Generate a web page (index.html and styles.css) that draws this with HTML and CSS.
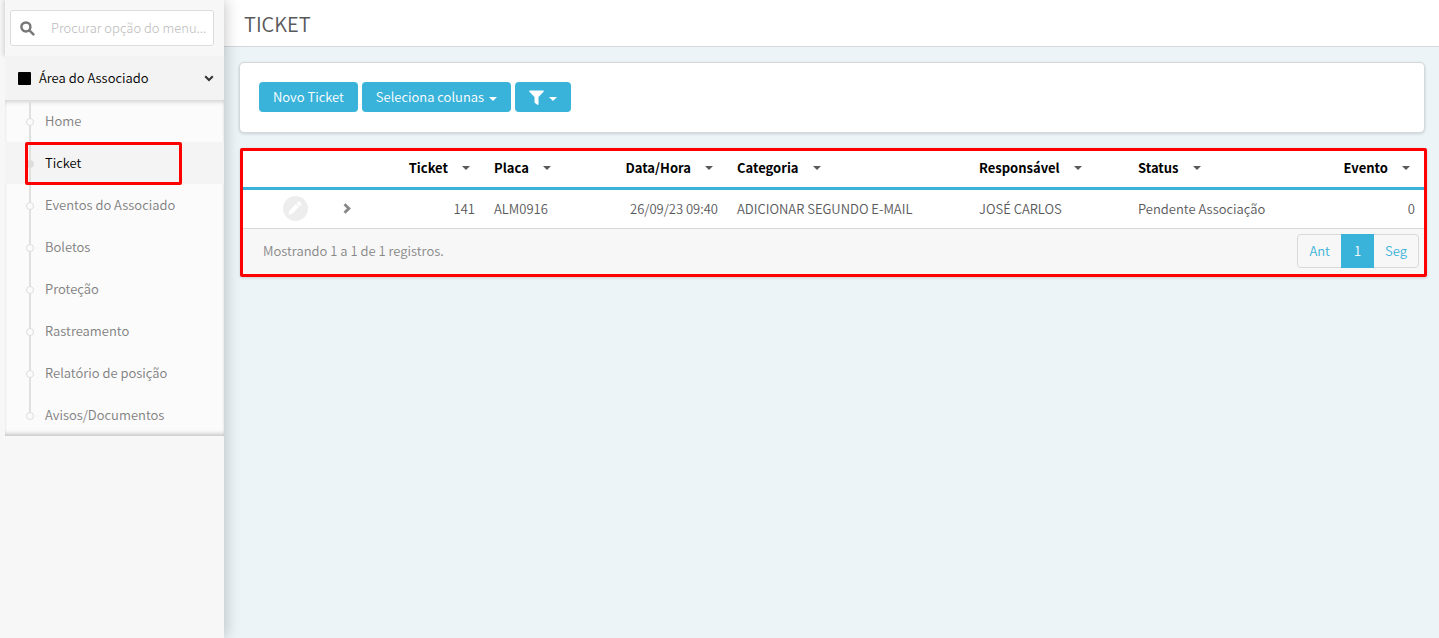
FILE: index.html
```html
<!DOCTYPE html>
<html lang="pt-BR">
<head>
<meta charset="utf-8">
<title>Ticket</title>
<link rel="stylesheet" href="styles.css">
</head>
<body>
<div class="app">
  <aside class="sidebar">
    <div class="sidebar-panel">
      <form class="search">
        <label class="search-box">
          <svg class="search-icon" viewBox="0 0 16 16" aria-hidden="true"><circle cx="6.3" cy="6.3" r="4.8"/><path d="M10 10l4.3 4.3"/></svg>
          <input class="search-input" type="text" placeholder="Procurar opção do menu..." aria-label="Procurar opção do menu">
        </label>
      </form>
      <nav class="menu">
        <button class="menu-group" type="button">
          <span class="menu-square"></span>
          <span class="menu-title">Área do Associado</span>
          <svg class="menu-chevron" viewBox="0 0 10 7" aria-hidden="true"><path d="M1.2 1.2L5 5l3.800-3.800"/></svg>
        </button>
        <ul class="submenu">
          <li class="item"><a class="link" href="#">Home</a></li>
          <li class="item active"><a class="link" href="#">Ticket</a></li>
          <li class="item"><a class="link" href="#">Eventos do Associado</a></li>
          <li class="item"><a class="link" href="#">Boletos</a></li>
          <li class="item"><a class="link" href="#">Proteção</a></li>
          <li class="item"><a class="link" href="#">Rastreamento</a></li>
          <li class="item"><a class="link" href="#">Relatório de posição</a></li>
          <li class="item"><a class="link" href="#">Avisos/Documentos</a></li>
        </ul>
      </nav>
    </div>
  </aside>
  <div class="main">
    <header class="page-header"><h1 class="page-title">TICKET</h1></header>
    <main class="content">
      <section class="card toolbar">
        <button class="btn" type="button">Novo Ticket</button>
        <button class="btn" type="button">Seleciona colunas <span class="caret"></span></button>
        <button class="btn" type="button" aria-label="Filtrar"><svg class="filter-icon" viewBox="0 0 15 15" aria-hidden="true"><path d="M.9.5h13.200c.7 0 1 .8.500 1.300L9.500 7v7.200c0 .6-.7.900-1.100.500L5.900 12.900a.8.8 0 0 1-.4-.6V7L.4 1.800C-.1 1.300.2.500.9.500z"/></svg><span class="caret"></span></button>
      </section>
      <section class="grid">
        <table class="table">
          <colgroup><col class="c-edit"><col class="c-open"><col class="c-ticket"><col class="c-placa"><col class="c-data"><col class="c-cat"><col class="c-resp"><col class="c-status"><col class="c-evento"></colgroup>
          <thead>
            <tr>
              <th></th><th></th>
              <th class="num">Ticket<span class="caret sort"></span></th>
              <th>Placa<span class="caret sort"></span></th>
              <th class="num">Data/Hora<span class="caret sort"></span></th>
              <th>Categoria<span class="caret sort"></span></th>
              <th>Responsável<span class="caret sort"></span></th>
              <th>Status<span class="caret sort"></span></th>
              <th class="num">Evento<span class="caret sort"></span></th>
            </tr>
          </thead>
          <tbody>
            <tr>
              <td class="mid edit-cell"><button class="edit" type="button" aria-label="Editar"><svg class="pencil" viewBox="0 0 14 14" aria-hidden="true"><path d="M.5 13.500l.6-3.600L7.900 3.100l3 3-6.800 6.800zM8.600 2.400L10 1c.6-.6 1.400-.6 2 0l1 1c.6.6.6 1.400 0 2l-1.400 1.400z"/></svg></button></td>
              <td class="mid"><button class="expand" type="button" aria-label="Expandir"><svg class="expand-icon" viewBox="0 0 8 11" aria-hidden="true"><path d="M1.500 1.200L5.900 5.500 1.500 9.800"/></svg></button></td>
              <td class="num">141</td>
              <td>ALM0916</td>
              <td class="num">26/09/23 09:40</td>
              <td>ADICIONAR SEGUNDO E-MAIL</td>
              <td>JOSÉ CARLOS</td>
              <td>Pendente Associação</td>
              <td class="num">0</td>
            </tr>
          </tbody>
        </table>
        <footer class="grid-footer">
          <span>Mostrando 1 a 1 de 1 registros.</span>
          <nav class="pager"><a class="page" href="#">Ant</a><a class="page current" href="#">1</a><a class="page" href="#">Seg</a></nav>
        </footer>
      </section>
    </main>
  </div>
</div>
</body>
</html>
```
FILE: styles.css
```css
*, *::before, *::after { box-sizing: border-box; }
body {
  margin: 0;
  font-family: "Noto Sans CJK JP", "Noto Sans", sans-serif;
  font-size: 13px;
  font-weight: 350;
  line-height: 20px;
  color: #58595b;
  background: #ecf4f8;
}
button, input { font: inherit; color: inherit; }
button { border: 0; padding: 0; background: none; }
a { text-decoration: none; color: inherit; }
.app { display: flex; min-height: 100vh; }

.sidebar {
  flex: 0 0 224px;
  padding-left: 5px;
  background: #f7f7f7;
  box-shadow: 2px 0 14px rgba(0, 0, 0, .2);
  position: relative;
  z-index: 1;
}
.search { padding: 10px 10px 10px 5px; box-shadow: -2px 0 4px rgba(0, 0, 0, .12); }
.search-box {
  display: flex;
  align-items: center;
  height: 36px;
  padding-left: 9px;
  border: 1px solid #ddd;
  border-radius: 3px;
  background: #fff;
}
.search-icon { flex: none; width: 15px; height: 15px; fill: none; stroke: #777; stroke-width: 2.6; stroke-linecap: round; }
.search-input {
  flex: 1;
  min-width: 0;
  margin-left: 16px;
  padding: 0;
  border: 0;
  outline: 0;
  background: none;
}
.search-input::placeholder { color: #bbb; font-weight: 300; opacity: 1; }
.menu-group {
  display: flex;
  align-items: center;
  width: 100%;
  height: 44px;
  padding: 0 10px 0 13px;
  background: #f3f3f3;
  color: #000;
  text-align: left;
}
.menu-square { width: 13px; height: 13px; border-radius: 1px; background: #000; }
.menu-title { flex: 1; margin-left: 8px; }
.menu-chevron { width: 10px; height: 7px; fill: none; stroke: #333; stroke-width: 2; }
.submenu {
  margin: 0;
  padding: 0;
  list-style: none;
  background: #fbfbfb;
  box-shadow: inset 0 4px 4px -2px rgba(0, 0, 0, .16), inset 0 -4px 4px -2px rgba(0, 0, 0, .22);
}
.item { position: relative; color: #808080; }
.item::before {
  content: "";
  position: absolute;
  left: 24px;
  top: 0;
  bottom: 0;
  width: 2px;
  background: #e0e0e0;
}
.item:last-child::before { bottom: 50%; }
.item::after {
  content: "";
  position: absolute;
  left: 21px;
  top: 18px;
  width: 8px;
  height: 8px;
  border: 1px solid #ddd;
  border-radius: 50%;
  background: #fbfbfb;
}
.item.active { background: #f4f4f4; color: #000; }
.item.active::after { background: #ddd; }
.link { display: block; padding: 11px 0 11px 40px; }
.item.active .link::before {
  content: "";
  position: absolute;
  z-index: 1;
  inset: 0 42px -1px 20px;
  border: 3px solid #f00;
  border-radius: 2px;
}

.main { flex: 1; min-width: 0; }
.page-header { height: 47px; padding: 10px 20px 8px; background: #fff; border-bottom: 1px solid #d5d8da; }
.page-title { margin: 0; font-size: 20px; line-height: 28px; font-weight: 350; }
.content { padding: 15px 14px 15px 15px; }
.card {
  border: 1px solid #d5d8da;
  border-radius: 5px;
  background: #fff;
  box-shadow: 0 1px 3px rgba(0, 0, 0, .15);
}
.toolbar { display: flex; gap: 4px; padding: 19px 19px 20px; }
.btn {
  display: flex;
  align-items: center;
  height: 30px;
  padding: 0 14px;
  border-radius: 4px;
  background: #3ab3da;
  color: #fff;
}
.caret {
  display: inline-block;
  margin: 3px 0 0 5px;
  border: 4px solid transparent;
  border-top-color: currentColor;
  border-bottom: 0;
}
.filter-icon { width: 15px; height: 15px; fill: #fff; }

.grid {
  margin: 15px -2px 0 1px;
  border: 3px solid #f00;
  border-radius: 2px;
  background: #f7f7f7;
  box-shadow: 0 1px 3px rgba(0, 0, 0, .15);
}
.table { width: 100%; table-layout: fixed; border-collapse: separate; border-spacing: 0; background: #fff; }
.c-edit { width: 78px; }
.c-open { width: 52px; }
.c-ticket { width: 111px; }
.c-placa { width: 94px; }
.c-data { width: 149px; }
.c-cat { width: 242px; }
.c-resp { width: 159px; }
.c-status { width: 150px; }
.c-evento { width: 146px; }
th, td { padding: 0 9px 0 10px; text-align: left; white-space: nowrap; }
th { height: 39px; padding-bottom: 2px; border-bottom: 3px solid #3ab3da; color: #000; font-weight: 700; }
th.num { padding-right: 14px; }
.num { text-align: right; }
td { height: 39px; border-bottom: 1px solid #d9d9d9; }
.sort { margin: 0 0 3px 14px; color: #58595b; }
td.mid { padding: 0 0 2px; text-align: center; }
td.edit-cell { padding-left: 26px; }
.edit, .expand { display: flex; align-items: center; justify-content: center; margin: 0 auto; }
.edit { width: 25px; height: 25px; border-radius: 50%; background: #ededed; }
.pencil { width: 14px; height: 14px; fill: #fff; }
.expand-icon { width: 8px; height: 11px; fill: none; stroke: #888; stroke-width: 2.8; }
.grid-footer {
  display: flex;
  align-items: center;
  justify-content: space-between;
  padding: 5px 5px 6px 20px;
  color: #888;
}
.pager { display: flex; border: 1px solid #d9d9d9; border-radius: 4px; color: #3ab3da; }
.page { padding: 6px 11px; }
.current { margin: -1px 0; padding: 7px 13px; background: #3ab3da; color: #fff; }
```
